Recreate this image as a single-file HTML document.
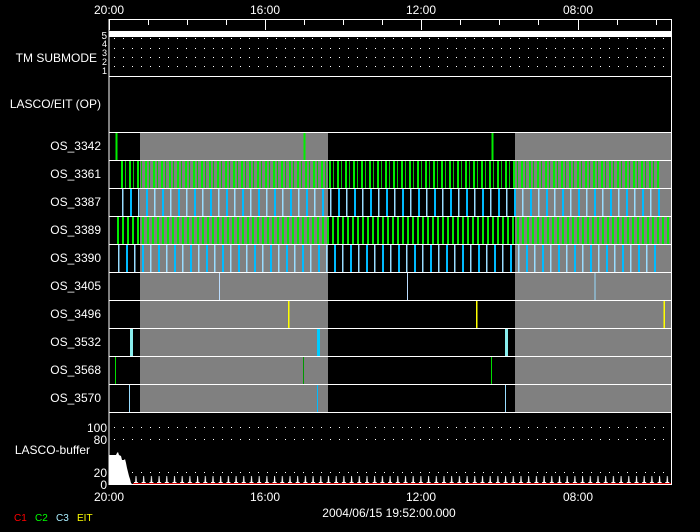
<!DOCTYPE html>
<html><head><meta charset="utf-8"><style>
html,body{margin:0;padding:0;background:#000;width:700px;height:532px;overflow:hidden}
svg{display:block}
text{font-family:"Liberation Sans",sans-serif;font-size:12px;fill:#fff}
</style></head><body>
<svg width="700" height="532" viewBox="0 0 700 532" xmlns="http://www.w3.org/2000/svg">
<defs>
<pattern id="g8" width="8" height="28" patternUnits="userSpaceOnUse" x="121" y="160"><rect x="0" width="2" height="28" fill="#0e0"/><rect x="4" width="1" height="28" fill="#0c0"/></pattern>
<pattern id="g5" width="5" height="28" patternUnits="userSpaceOnUse" x="117" y="216"><rect x="0" width="2" height="28" fill="#0e0"/></pattern>
<pattern id="c16" width="16" height="28" patternUnits="userSpaceOnUse" x="122" y="188"><rect x="0" width="1.5" height="28" fill="#9df"/><rect x="8" width="2" height="28" fill="#0bf"/></pattern>
<pattern id="c16b" width="16" height="28" patternUnits="userSpaceOnUse" x="118" y="244"><rect x="0" width="1.5" height="28" fill="#9df"/><rect x="8" width="2" height="28" fill="#0bf"/></pattern>
<pattern id="spk" width="7.7" height="12" patternUnits="userSpaceOnUse" x="133" y="472"><polygon points="2,12 2.6,4 3.4,4 4,12" fill="#fff"/><rect x="1" y="10" width="4" height="2" fill="#fff"/></pattern>
</defs>
<text x="109" y="14" text-anchor="middle">20:00</text>
<text x="265" y="14" text-anchor="middle">16:00</text>
<text x="421" y="14" text-anchor="middle">12:00</text>
<text x="578" y="14" text-anchor="middle">08:00</text>
<rect x="140" y="132" width="188" height="280" fill="#808080"/>
<rect x="515" y="132" width="156" height="280" fill="#808080"/>
<rect x="109" y="31" width="562" height="6" fill="#fff"/>
<g stroke="#fff" stroke-width="1" stroke-dasharray="1 8">
<line x1="114" y1="38.5" x2="670" y2="38.5"/>
<line x1="114" y1="48.5" x2="670" y2="48.5"/>
<line x1="114" y1="57.5" x2="670" y2="57.5"/>
<line x1="114" y1="66.5" x2="670" y2="66.5"/>
<line x1="114" y1="427.5" x2="670" y2="427.5"/>
<line x1="114" y1="439.5" x2="670" y2="439.5"/>
<line x1="114" y1="472.5" x2="670" y2="472.5"/>
</g>
<rect x="121" y="160" width="540" height="28" fill="url(#g8)"/>
<rect x="122" y="188" width="538" height="28" fill="url(#c16)"/>
<rect x="117" y="216" width="554" height="28" fill="url(#g5)"/>
<rect x="118" y="244" width="543" height="28" fill="url(#c16b)"/>
<g>
<rect x="115.5" y="132" width="2" height="28" fill="#0e0"/><rect x="303.5" y="132" width="2" height="28" fill="#0e0"/><rect x="491.5" y="132" width="2" height="28" fill="#0e0"/>
<rect x="219" y="272" width="1" height="28" fill="#bdf"/><rect x="407" y="272" width="1" height="28" fill="#bdf"/><rect x="594.5" y="272" width="1" height="28" fill="#9df"/>
<rect x="288" y="300" width="1.5" height="28" fill="#ff0"/><rect x="476" y="300" width="1.5" height="28" fill="#ff0"/><rect x="663.5" y="300" width="1.5" height="28" fill="#ff0"/>
<rect x="130" y="328" width="3" height="28" fill="#8ee"/><rect x="317" y="328" width="3" height="28" fill="#0cf"/><rect x="505" y="328" width="3" height="28" fill="#8ee"/>
<rect x="115" y="356" width="1" height="28" fill="#0d0"/><rect x="303" y="356" width="1" height="28" fill="#090"/><rect x="491" y="356" width="1" height="28" fill="#0d0"/>
<rect x="129" y="384" width="1" height="28" fill="#9df"/><rect x="317" y="384" width="1" height="28" fill="#0bf"/><rect x="505" y="384" width="1" height="28" fill="#9df"/>
</g>
<polygon points="109,484 109,455 116,455 117,453 118,452 119,455 121,456 122,460 124,460 125,459 126,463 127,468 128,472 129,476 130,479 131,483 132,484" fill="#fff"/>
<rect x="133" y="472" width="538" height="12" fill="url(#spk)"/>
<rect x="133" y="483" width="538" height="1" fill="#d00"/>
<g stroke="#fff" stroke-width="1" fill="none">
<path d="M109,19.5H671.5V484.5H109Z"/>
<path d="M109,76.5H671M109,132.5H671M109,160.5H671M109,188.5H671M109,216.5H671M109,244.5H671M109,272.5H671M109,300.5H671M109,328.5H671M109,356.5H671M109,384.5H671M109,412.5H671"/>
<path d="M109.5,19V30M148.5,19V25M187.5,19V25M226.5,19V25M265.5,19V30M304.5,19V25M343.5,19V25M382.5,19V25M421.5,19V30M460.5,19V25M499.5,19V25M538.5,19V25M578.5,19V30M617.5,19V25M656.5,19V25"/>
</g>
<g text-anchor="end">
<text x="97" y="62">TM SUBMODE</text>
<text x="101" y="108">LASCO/EIT (OP)</text>
<text x="101" y="150">OS_3342</text>
<text x="101" y="178">OS_3361</text>
<text x="101" y="206">OS_3387</text>
<text x="101" y="234">OS_3389</text>
<text x="101" y="262">OS_3390</text>
<text x="101" y="290">OS_3405</text>
<text x="101" y="318">OS_3496</text>
<text x="101" y="346">OS_3532</text>
<text x="101" y="374">OS_3568</text>
<text x="101" y="402">OS_3570</text>
<text x="90" y="454">LASCO-buffer</text>
<text x="107" y="432">100</text>
<text x="107" y="444">80</text>
<text x="107" y="477">20</text>
<text x="107" y="489">0</text>
<text x="107" y="39" style="font-size:10px">5</text>
<text x="107" y="47" style="font-size:9px">4</text>
<text x="107" y="56" style="font-size:9px">3</text>
<text x="107" y="65" style="font-size:9px">2</text>
<text x="107" y="74" style="font-size:9px">1</text>
</g>
<text x="109" y="501" text-anchor="middle">20:00</text>
<text x="265" y="501" text-anchor="middle">16:00</text>
<text x="421" y="501" text-anchor="middle">12:00</text>
<text x="578" y="501" text-anchor="middle">08:00</text>
<text x="389" y="517" text-anchor="middle">2004/06/15 19:52:00.000</text>
<text x="14" y="521" style="fill:#f00;font-size:10px">C1</text>
<text x="35" y="521" style="fill:#0f0;font-size:10px">C2</text>
<text x="56" y="521" style="fill:#aef;font-size:10px">C3</text>
<text x="77" y="521" style="fill:#ff0;font-size:10px">EIT</text>
</svg>
</body></html>
